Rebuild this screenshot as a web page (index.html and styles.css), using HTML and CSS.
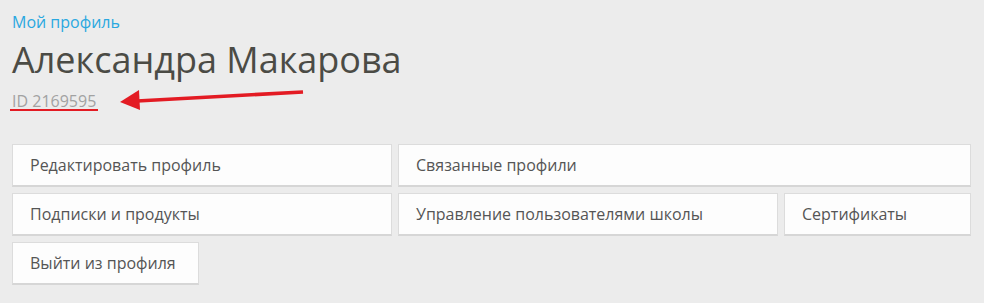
FILE: index.html
```html
<!DOCTYPE html>
<html lang="ru">
<head>
<meta charset="utf-8">
<title>Мой профиль</title>
<link rel="stylesheet" href="styles.css">
</head>
<body>
<div class="page">
  <a class="crumb" href="#">Мой профиль</a>
  <h1 class="name">Александра Макарова</h1>
  <div class="id-line">
    <span class="user-id">ID 2169595</span>
    <span class="mark-underline"></span>
    <svg class="mark-arrow" width="200" height="30" viewBox="0 0 200 30" aria-hidden="true">
      <line x1="17" y1="19" x2="183" y2="10" stroke="#e31b23" stroke-width="3.6"/>
      <polygon points="0,20 19,8 20,28" fill="#e31b23"/>
    </svg>
  </div>
  <nav class="actions">
    <a class="action span-2" href="#">Редактировать профиль</a>
    <a class="action span-3" href="#">Связанные профили</a>
    <a class="action span-2" href="#">Подписки и продукты</a>
    <a class="action span-2" href="#">Управление пользователями школы</a>
    <a class="action" href="#">Сертификаты</a>
    <a class="action" href="#">Выйти из профиля</a>
  </nav>
</div>
</body>
</html>
```

FILE: styles.css
```css
html, body {
  margin: 0;
  padding: 0;
  background: #ececec;
}
body {
  font-family: "Open Sans", "Noto Sans", sans-serif;
  color: #555;
}
.page {
  padding: 11px 13px 0 12px;
}
.crumb {
  display: block;
  font-size: 16px;
  line-height: 22px;
  color: #2aa8e0;
  text-decoration: none;
}
.name {
  margin: 5px 0 0;
  font-size: 36px;
  line-height: 44px;
  font-weight: 400;
  color: #4b4b45;
}
.id-line {
  position: relative;
  margin-top: 8px;
  height: 20px;
}
.user-id {
  font-size: 16px;
  line-height: 20px;
  color: #a2a2a2;
}
.mark-underline {
  position: absolute;
  left: -2px;
  top: 19px;
  width: 88px;
  height: 2px;
  background: #e31b23;
}
.mark-arrow {
  position: absolute;
  left: 108px;
  top: -8px;
}
.actions {
  display: grid;
  grid-template-columns: repeat(5, 1fr);
  grid-auto-rows: 43px;
  gap: 6px;
  margin-top: 34px;
}
.action {
  display: flex;
  align-items: center;
  padding: 0 17px;
  background: #fdfdfd;
  border: 1px solid #dcdcdc;
  border-bottom: 2px solid #d6d6d6;
  font-size: 16px;
  color: #555;
  text-decoration: none;
  white-space: nowrap;
}
.span-2 { grid-column: span 2; }
.span-3 { grid-column: span 3; }
```
